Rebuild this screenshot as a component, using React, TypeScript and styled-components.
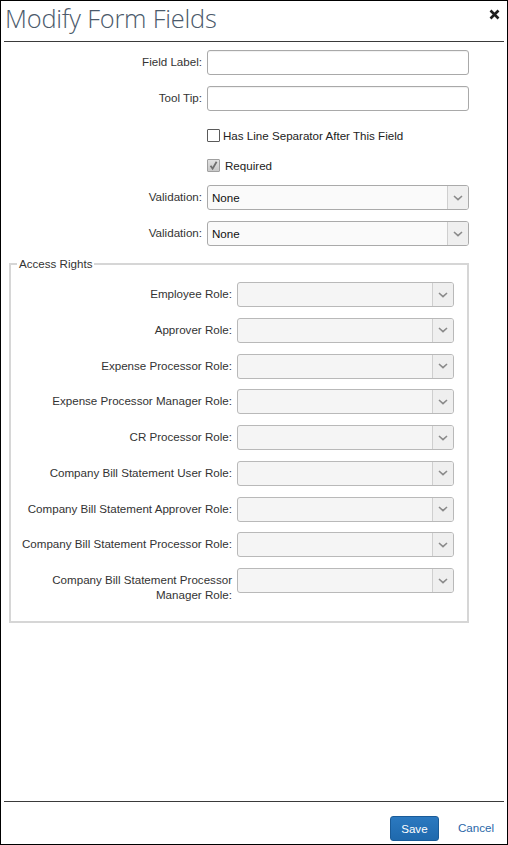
import { createGlobalStyle, styled } from 'styled-components';

const GlobalStyle = createGlobalStyle`
  * { box-sizing: border-box; }
  body {
    margin: 0;
    font-family: "Liberation Sans", Arial, sans-serif;
    font-size: 11.6px;
    color: #333;
    background: #fff;
  }
`;

const ROLES: string[] = [
  'Employee Role:',
  'Approver Role:',
  'Expense Processor Role:',
  'Expense Processor Manager Role:',
  'CR Processor Role:',
  'Company Bill Statement User Role:',
  'Company Bill Statement Approver Role:',
  'Company Bill Statement Processor Role:',
  'Company Bill Statement Processor Manager Role:',
];

const Chevron = () => (
  <svg width="10" height="6" viewBox="0 0 10 6">
    <path d="M1 1 L5 4.6 L9 1" fill="none" stroke="#8a8a8a" strokeWidth="1.6" />
  </svg>
);

const CloseIcon = () => (
  <svg width="11" height="11" viewBox="0 0 11 11">
    <path d="M1.5 1.5 L9.5 9.5 M9.5 1.5 L1.5 9.5" stroke="#1e1e1e" strokeWidth="2.6" />
  </svg>
);

const CheckMark = () => (
  <svg width="11" height="11" viewBox="0 0 11 11">
    <path d="M2.5 5.8 L4.6 8.6 L8.6 1.8" fill="none" stroke="#6f6f6f" strokeWidth="1.8" />
  </svg>
);

type SelectProps = { value?: string; $muted?: boolean };

const Select = ({ value, $muted }: SelectProps) => (
  <SelectBox $muted={$muted}>
    <SelectValue>{value}</SelectValue>
    <SelectArrow>
      <Chevron />
    </SelectArrow>
  </SelectBox>
);

const App = () => {
  return (
    <>
      <GlobalStyle />
      <Dialog>
        <Header>
          <Title>{'Modify Form Fields'}</Title>
          <CloseButton>
            <CloseIcon />
          </CloseButton>
        </Header>

        <Body>
          <FormGrid>
            <Label>{'Field Label:'}</Label>
            <TextInput />
            <Label>{'Tool Tip:'}</Label>
            <TextInput />
            <span />
            <CheckRow $top={4}>
              <CheckBox />
              <CheckText>{'Has Line Separator After This Field'}</CheckText>
            </CheckRow>
            <span />
            <CheckRow $top={1}>
              <CheckBox $checked>
                <CheckMark />
              </CheckBox>
              <CheckText $shift={2}>{'Required'}</CheckText>
            </CheckRow>
            <Label>{'Validation:'}</Label>
            <Select value="None" />
            <Label>{'Validation:'}</Label>
            <Select value="None" />
          </FormGrid>

          <AccessRights>
            <Legend>{'Access Rights'}</Legend>
            <RoleGrid>
              {ROLES.map(role => (
                <RoleRow key={role}>
                  <RoleLabel>{role}</RoleLabel>
                  <Select $muted />
                </RoleRow>
              ))}
            </RoleGrid>
          </AccessRights>
        </Body>

        <Footer>
          <SaveButton>{'Save'}</SaveButton>
          <CancelLink>{'Cancel'}</CancelLink>
        </Footer>
      </Dialog>
    </>
  );
};

export default App;

const Dialog = styled.div`
  display: flex;
  flex-direction: column;
  width: 508px;
  height: 845px;
  border: 1px solid #000;
  background: #fff;
`;

const Header = styled.div`
  display: flex;
  align-items: flex-start;
  justify-content: space-between;
  height: 41px;
  margin: 0 3px;
  border-bottom: 1px solid #3a3a3a;
`;

const Title = styled.h1`
  margin: 0 0 0 1px;
  font-family: "Open Sans", "Segoe UI", sans-serif;
  font-weight: 300;
  font-size: 25.4px;
  line-height: 34px;
  color: #4b5a6b;
  letter-spacing: -0.2px;
`;

const CloseButton = styled.span`
  display: flex;
  margin: 8px 4px 0 0;
`;

const Body = styled.div`
  flex: 1;
  padding-top: 8px;
`;

const FormGrid = styled.div`
  display: grid;
  grid-template-columns: 201px 262px;
  column-gap: 5px;
  row-gap: 11px;
  align-items: start;
`;

const Label = styled.label`
  justify-self: end;
  padding-top: 4px;
  line-height: 15px;
  text-align: right;
  color: #333;
`;

const TextInput = styled.div`
  height: 25px;
  border: 1px solid #a9a9a9;
  border-radius: 3px;
  background: #fff;
  box-shadow: inset 0 1px 1px rgba(0, 0, 0, 0.06);
`;

const CheckRow = styled.div<{ $top: number }>`
  display: flex;
  align-items: center;
  height: 18px;
  margin-top: ${props => props.$top}px;
`;

const CheckBox = styled.span<{ $checked?: boolean }>`
  display: flex;
  align-items: center;
  justify-content: center;
  width: 13px;
  height: 13px;
  border: 1px solid ${props => (props.$checked ? '#a0a0a0' : '#5a5a5a')};
  border-radius: 1px;
  background: ${props =>
    props.$checked ? 'linear-gradient(#e2e2e2, #c9c9c9)' : '#fff'};
`;

const CheckText = styled.span<{ $shift?: number }>`
  margin-left: ${props => 3 + (props.$shift ?? 0)}px;
  color: #222;
`;

const SelectBox = styled.div<{ $muted?: boolean }>`
  display: flex;
  height: 25px;
  border: 1px solid ${props => (props.$muted ? '#b9b9b9' : '#aaaaaa')};
  border-radius: 3px;
  background: ${props => (props.$muted ? '#f5f5f5' : '#fafafa')};
  overflow: hidden;
`;

const SelectValue = styled.span`
  flex: 1;
  padding: 0 4px;
  line-height: 23px;
  color: #111;
`;

const SelectArrow = styled.span`
  display: flex;
  align-items: center;
  justify-content: center;
  width: 21px;
  border-left: 1px solid #cfcfcf;
  background: #efefef;
`;

const AccessRights = styled.fieldset`
  width: 460px;
  margin: 10px 0 0 8px;
  padding: 10px 13px 19px 0;
  border: 2px solid #d6d6d6;
  border-radius: 0;
`;

const Legend = styled.legend`
  margin-left: 6px;
  padding: 0 2px;
  line-height: 16px;
  color: #333;
`;

const RoleGrid = styled.div`
  display: flex;
  flex-direction: column;
  gap: 10.75px;
`;

const RoleRow = styled.div`
  display: grid;
  grid-template-columns: 221px 217px;
  column-gap: 5px;
  align-items: start;
`;

const RoleLabel = styled.label`
  padding-top: 4px;
  line-height: 15px;
  text-align: right;
  color: #333;
`;

const Footer = styled.div`
  display: flex;
  align-items: flex-start;
  justify-content: flex-end;
  gap: 19px;
  height: 43px;
  margin: 0 3px;
  padding: 14px 10px 0 0;
  border-top: 1px solid #3a3a3a;
`;

const SaveButton = styled.button`
  width: 49px;
  height: 25px;
  padding: 0;
  border: 1px solid #1a5b98;
  border-radius: 3px;
  background: linear-gradient(#2b79c0, #1f69ad);
  color: #fff;
  font-family: "Liberation Sans", Arial, sans-serif;
  font-size: 11.6px;
`;

const CancelLink = styled.span`
  margin-top: 5px;
  color: #2a67a8;
  font-size: 11.6px;
`;
